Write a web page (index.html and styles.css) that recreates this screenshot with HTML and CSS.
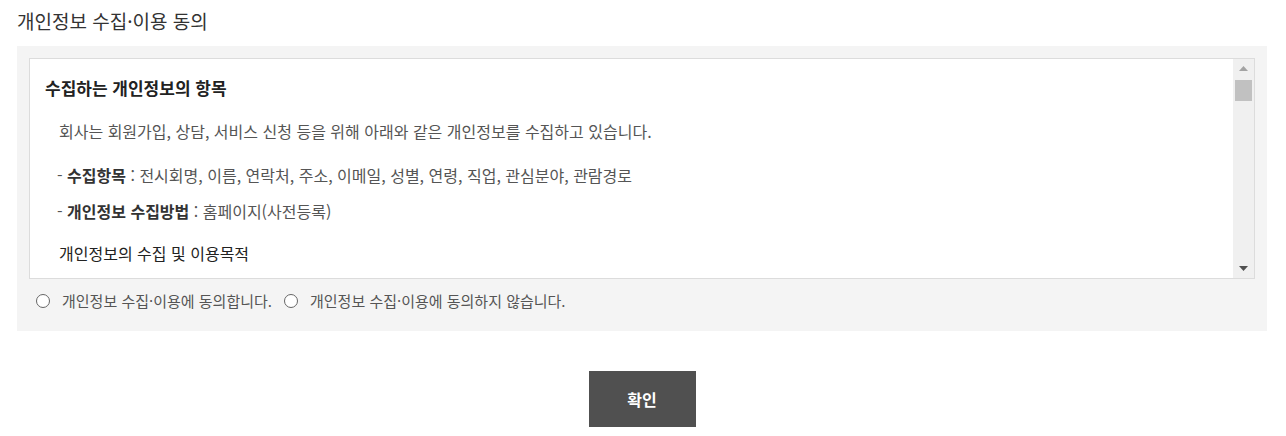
FILE: index.html
```html
<!DOCTYPE html>
<html lang="ko">
<head>
<meta charset="utf-8">
<title>개인정보 수집·이용 동의</title>
<link rel="stylesheet" href="styles.css">
</head>
<body>
<div class="page">
  <h2 class="title">개인정보 수집·이용 동의</h2>
  <div class="agree-box">
    <div class="terms">
      <div class="terms-body">
        <h3 class="terms-head">수집하는 개인정보의 항목</h3>
        <p class="terms-p">회사는 회원가입, 상담, 서비스 신청 등을 위해 아래와 같은 개인정보를 수집하고 있습니다.</p>
        <p class="terms-li">- <b>수집항목</b> : 전시회명, 이름, 연락처, 주소, 이메일, 성별, 연령, 직업, 관심분야, 관람경로</p>
        <p class="terms-li tight">- <b>개인정보 수집방법</b> : 홈페이지(사전등록)</p>
        <h4 class="terms-sub">개인정보의 수집 및 이용목적</h4>
      </div>
      <div class="scrollbar">
        <div class="sb-btn"><svg class="arrow" width="9" height="5" viewBox="0 0 9 5"><polygon points="4.5,0 9,5 0,5" fill="#a3a3a3"/></svg></div>
        <div class="sb-thumb"></div>
        <div class="sb-track"></div>
        <div class="sb-btn"><svg class="arrow" width="9" height="5" viewBox="0 0 9 5"><polygon points="0,0 9,0 4.5,5" fill="#505050"/></svg></div>
      </div>
    </div>
    <div class="choices">
      <label class="choice"><input type="radio" name="agree" class="radio"><span>개인정보 수집·이용에 동의합니다.</span></label>
      <label class="choice"><input type="radio" name="agree" class="radio"><span>개인정보 수집·이용에 동의하지 않습니다.</span></label>
    </div>
  </div>
  <div class="actions">
    <button class="btn-ok" type="button">확인</button>
  </div>
</div>
</body>
</html>
```
FILE: styles.css
```css
* { box-sizing: border-box; }
html, body { margin: 0; padding: 0; background: #fff; }
body {
  font-family: "Noto Sans CJK KR", "Noto Sans", sans-serif;
  color: #333;
}
.page {
  width: 1250px;
  margin-left: 17px;
}
.title {
  margin: 7px 0 12px;
  font-size: 19px;
  line-height: 27px;
  font-weight: 400;
  color: #333;
}
.agree-box {
  background: #f4f4f4;
  padding: 12px 12px 20px;
}
.terms {
  display: flex;
  height: 221px;
  border: 1px solid #dcdcdc;
  background: #fff;
  overflow: hidden;
}
.terms-body {
  flex: 1;
  padding: 17px 15px 0;
  overflow: hidden;
}
.terms-head {
  margin: 0;
  font-size: 17px;
  line-height: 24px;
  font-weight: 700;
  color: #222;
}
.terms-p {
  margin: 20px 0 0 14px;
  font-size: 16px;
  line-height: 22px;
  color: #555;
}
.terms-li {
  margin: 22px 0 0 12px;
  font-size: 16px;
  line-height: 22px;
  color: #555;
}
.terms-li.tight { margin-top: 14px; }
.terms-li b { font-weight: 700; color: #333; }
.terms-sub {
  margin: 20px 0 0 14px;
  font-size: 16px;
  line-height: 22px;
  font-weight: 400;
  color: #222;
}
.scrollbar {
  width: 21px;
  flex: none;
  display: flex;
  flex-direction: column;
  background: #f0f0f0;
}
.sb-btn {
  height: 19px;
  display: flex;
  align-items: center;
  justify-content: center;
  flex: none;
}
.arrow { display: block; }
.sb-thumb {
  height: 21px;
  margin: 2px 2px 0;
  background: #c1c1c1;
  flex: none;
}
.sb-track { flex: 1; }
.choices {
  display: flex;
  align-items: center;
  padding: 12px 0 0 7px;
  height: 32px;
}
.choice {
  display: flex;
  align-items: center;
  font-size: 15px;
  line-height: 20px;
  color: #555;
  margin-right: 12px;
}
.radio {
  appearance: none;
  -webkit-appearance: none;
  flex: none;
  width: 14px;
  height: 14px;
  margin: 0 12px 0 0;
  border: 1px solid #666;
  border-radius: 50%;
  background: #fff;
}
.actions {
  display: flex;
  justify-content: center;
  padding-top: 40px;
}
.btn-ok {
  width: 107px;
  height: 56px;
  border: 0;
  background: #505050;
  color: #fff;
  font-family: "Noto Sans CJK KR", "Noto Sans", sans-serif;
  font-size: 16px;
  font-weight: 700;
  padding: 0;
}
```
